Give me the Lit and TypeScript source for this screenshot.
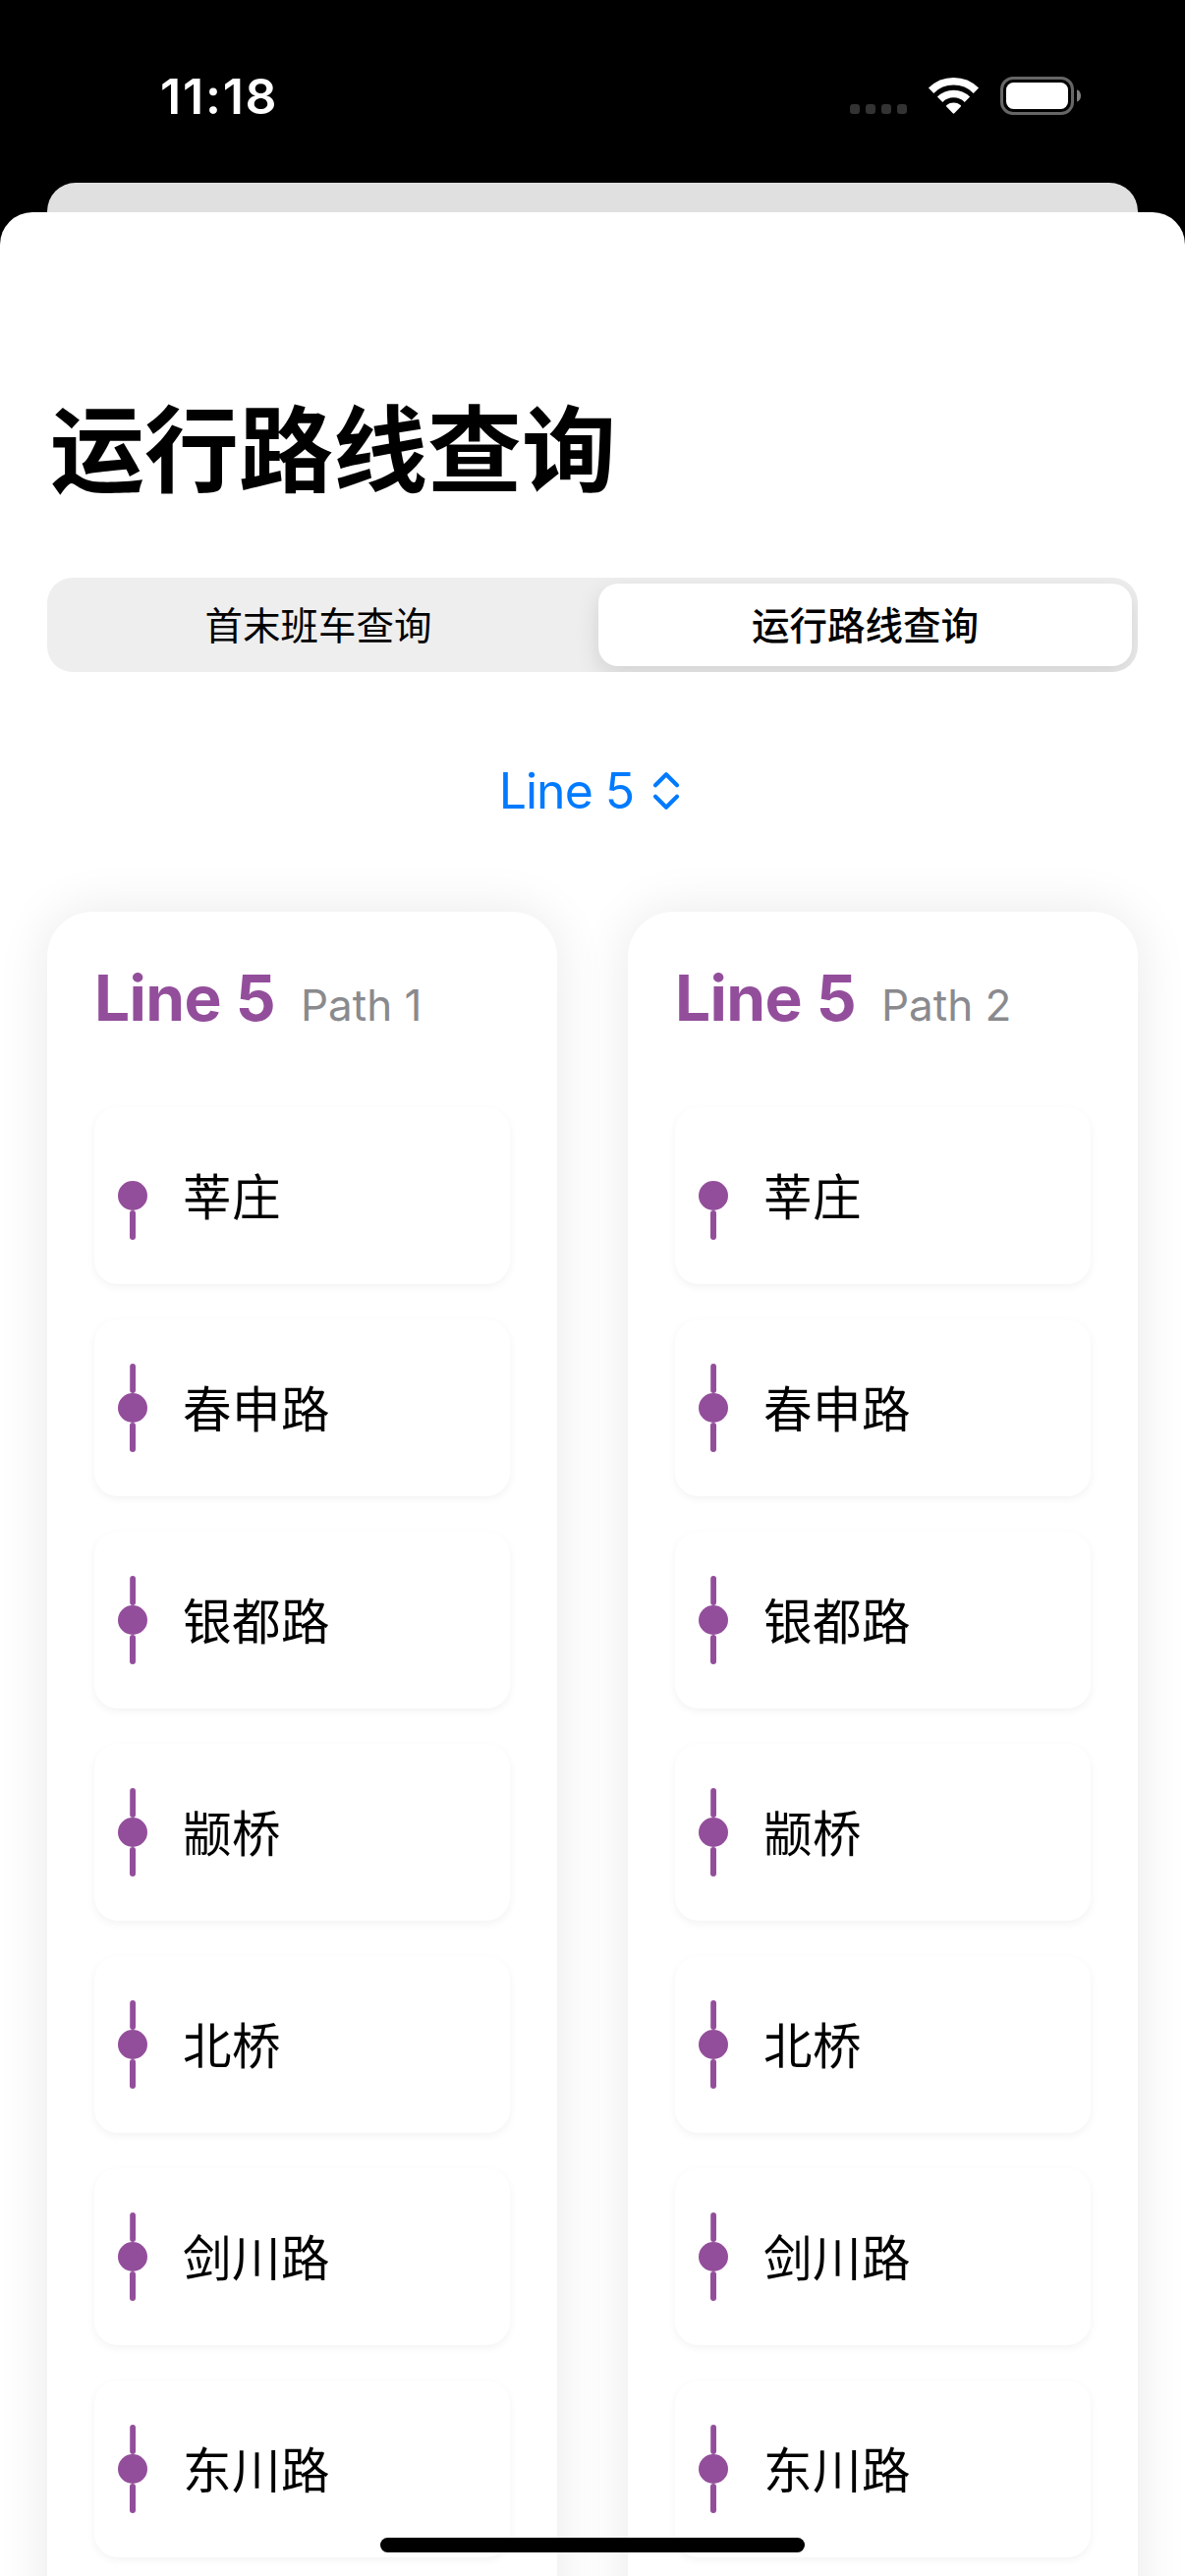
import { LitElement, html, css, svg, nothing } from "lit";
import { customElement, property, state } from "lit/decorators.js";

const STATIONS = ["莘庄", "春申路", "银都路", "颛桥", "北桥", "剑川路", "东川路"];

@customElement("status-bar")
class StatusBar extends LitElement {
  static styles = css`
    :host {
      display: flex;
      justify-content: space-between;
      align-items: flex-start;
      box-sizing: border-box;
      height: 186px;
      padding: 68px 106px 0 163px;
      color: #fff;
    }
    .time {
      font-size: 50px;
      line-height: 60px;
      font-weight: 600;
      letter-spacing: 1.8px;
    }
    .icons {
      display: block;
      width: 235px;
      height: 60px;
    }
  `;

  render() {
    return html`
      <div class="time">11:18</div>
      <svg class="icons" viewBox="865 68 235 60">
        ${[865, 881, 897, 913].map(
          (x) => svg`<rect x=${x} y="106" width="10" height="10" rx="3.2" fill="#333"/>`
        )}
        <g fill="none" stroke="#fff" stroke-width="7.6">
          <path d="M947.6 92.2A32.6 32.6 0 0 1 993.4 92.2"/>
          <path d="M956.6 101.3A19.7 19.7 0 0 1 984.4 101.3"/>
        </g>
        <path fill="#fff" d="M963.2 108.4Q962.6 107.6 963.4 107A11.4 11.4 0 0 1 977.6 107Q978.4 107.6 977.8 108.4L971.3 115.3Q970.5 116 969.7 115.3Z"/>
        <rect x="1019.5" y="79.5" width="72" height="36" rx="11.5" fill="none" stroke="#666" stroke-width="3"/>
        <rect x="1024" y="84" width="63" height="27" rx="7.5" fill="#fff"/>
        <path fill="#7f7f7f" d="M1096 91.2Q1100 93 1100 97.4T1096 103.6Z"/>
      </svg>
    `;
  }
}

@customElement("segmented-control")
class SegmentedControl extends LitElement {
  @property({ type: Array }) options: string[] = [];
  @property({ type: Number }) selected = 0;

  static styles = css`
    :host {
      display: grid;
      grid-template-columns: 1fr 1fr;
      box-sizing: border-box;
      height: 96px;
      padding: 6px;
      border-radius: 26px;
      background: #eee;
      overflow: hidden;
    }
    .option {
      display: flex;
      align-items: center;
      justify-content: center;
      box-sizing: border-box;
      margin-right: 9px;
      padding-bottom: 4px;
      border-radius: 20px;
      font-size: 38.5px;
      color: #000;
      cursor: pointer;
    }
    .option.on {
      margin: 0 0 0 6px;
      background: #fff;
      font-weight: 500;
      box-shadow: 0 9px 24px rgba(0, 0, 0, 0.12);
    }
  `;

  render() {
    return this.options.map(
      (label, i) => html`
        <div
          class="option ${i === this.selected ? "on" : ""}"
          @click=${() => this.dispatchEvent(new CustomEvent("pick", { detail: i }))}
        >${label}</div>
      `
    );
  }
}

@customElement("station-row")
class StationRow extends LitElement {
  @property() name = "";
  @property({ type: Boolean }) first = false;

  static styles = css`
    :host {
      display: flex;
      align-items: center;
      box-sizing: border-box;
      height: 180px;
      padding: 0 24px;
      gap: 36px;
      border-radius: 24px;
      background: #fff;
      box-shadow: 0 3px 9px rgba(0, 0, 0, 0.05);
    }
    .marker {
      display: block;
      width: 30px;
      height: 90px;
      fill: #934e9b;
    }
    .name {
      padding-top: 4px;
      font-size: 49.5px;
      line-height: 72px;
      letter-spacing: 0.5px;
      color: #000;
    }
  `;

  render() {
    return html`
      <svg class="marker" viewBox="0 0 30 90">
        ${this.first ? nothing : svg`<rect x="12.2" y="0" width="5.8" height="30" rx="2.9"/>`}
        <circle cx="15" cy="45" r="15"/>
        <rect x="12" y="60" width="6" height="30" rx="3"/>
      </svg>
      <span class="name">${this.name}</span>
    `;
  }
}

@customElement("path-card")
class PathCard extends LitElement {
  @property() line = "";
  @property() path = "";
  @property({ type: Array }) stations: string[] = [];

  static styles = css`
    :host {
      display: block;
      box-sizing: border-box;
      height: 1800px;
      padding: 48px 48px 0;
      border-radius: 46px;
      background: #fff;
      box-shadow: 0 0 54px rgba(0, 0, 0, 0.09);
    }
    .head {
      display: flex;
      align-items: baseline;
      gap: 26px;
      height: 151px;
      white-space: nowrap;
    }
    .line {
      font-size: 64px;
      line-height: 80px;
      font-weight: 700;
      letter-spacing: -0.6px;
      color: #934e9b;
    }
    .path {
      font-size: 44px;
      color: #8a8a8e;
    }
    .rows {
      display: flex;
      flex-direction: column;
      gap: 36px;
    }
  `;

  render() {
    return html`
      <div class="head">
        <span class="line">${this.line}</span>
        <span class="path">${this.path}</span>
      </div>
      <div class="rows">
        ${this.stations.map(
          (s, i) => html`<station-row .name=${s} ?first=${i === 0}></station-row>`
        )}
      </div>
    `;
  }
}

@customElement("app-root")
class AppRoot extends LitElement {
  @state() private tab = 1;

  static styles = css`
    :host {
      display: flex;
      flex-direction: column;
      position: relative;
      width: 1206px;
      height: 2622px;
      overflow: hidden;
      background: #000;
      font-family: Inter, "Noto Sans CJK SC", sans-serif;
    }
    .behind {
      flex: none;
      height: 30px;
      margin: 0 48px;
      border-radius: 29px 29px 0 0;
      background: #e0e0e0;
    }
    .sheet {
      flex: 1;
      min-height: 0;
      overflow: hidden;
      box-sizing: border-box;
      padding: 182px 48px 0;
      border-radius: 33px 33px 0 0;
      background: #fff;
    }
    .title {
      margin: 0 0 70px;
      padding-left: 3px;
      font-size: 96px;
      line-height: 120px;
      font-weight: 700;
      color: #000;
    }
    .picker {
      display: flex;
      justify-content: center;
      align-items: center;
      gap: 19px;
      height: 72px;
      margin: 85px 0 87px;
      padding-right: 6px;
      font-size: 50px;
      letter-spacing: -1px;
      color: #007aff;
    }
    .chevrons {
      width: 28px;
      height: 40px;
      fill: none;
      stroke: #007aff;
      stroke-width: 4.2;
      stroke-linecap: round;
      stroke-linejoin: round;
    }
    .cards {
      display: grid;
      grid-template-columns: 1fr 1fr;
      gap: 72px;
    }
    .home {
      position: absolute;
      left: 387px;
      bottom: 24px;
      width: 432px;
      height: 15px;
      border-radius: 8px;
      background: #000;
    }
  `;

  render() {
    return html`
      <status-bar></status-bar>
      <div class="behind"></div>
      <main class="sheet">
        <h1 class="title">运行路线查询</h1>
        <segmented-control
          .options=${["首末班车查询", "运行路线查询"]}
          .selected=${this.tab}
          @pick=${(e: CustomEvent) => (this.tab = e.detail)}
        ></segmented-control>
        <div class="picker">
          <span>Line 5</span>
          <svg class="chevrons" viewBox="0 0 28 40">
            <path d="M3 14.2L14 3.2L25 14.2M3 25.8L14 36.8L25 25.8"/>
          </svg>
        </div>
        <div class="cards">
          ${["Path 1", "Path 2"].map(
            (p) => html`<path-card line="Line 5" .path=${p} .stations=${STATIONS}></path-card>`
          )}
        </div>
      </main>
      <div class="home"></div>
    `;
  }
}
